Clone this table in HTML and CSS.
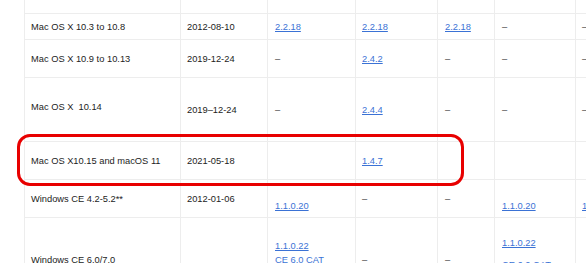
FILE: index.html
```html
<!DOCTYPE html>
<html lang="en">
<head>
<meta charset="utf-8">
<title>Supported platforms</title>
<link rel="stylesheet" href="styles.css">
</head>
<body>
<div class="page">
  <div class="grid">
    <div class="c"></div><div class="c"></div><div class="c"></div><div class="c"></div><div class="c"></div><div class="c"></div><div class="c"></div>

    <div class="c">Mac OS X 10.3 to 10.8</div>
    <div class="c">2012-08-10</div>
    <div class="c"><a href="#">2.2.18</a></div>
    <div class="c"><a href="#">2.2.18</a></div>
    <div class="c"><a href="#">2.2.18</a></div>
    <div class="c"><span class="dash">–</span></div>
    <div class="c"><span class="dash">–</span></div>

    <div class="c">Mac OS X 10.9 to 10.13</div>
    <div class="c">2019-12-24</div>
    <div class="c"><span class="dash">–</span></div>
    <div class="c"><a href="#">2.4.2</a></div>
    <div class="c"><span class="dash">–</span></div>
    <div class="c"><span class="dash">–</span></div>
    <div class="c"><span class="dash">–</span></div>

    <div class="c up">Mac OS X&nbsp; 10.14</div>
    <div class="c">2019–12-24</div>
    <div class="c"><span class="dash">–</span></div>
    <div class="c"><a href="#">2.4.4</a></div>
    <div class="c"><span class="dash">–</span></div>
    <div class="c"><span class="dash">–</span></div>
    <div class="c"><span class="dash">–</span></div>

    <div class="c">Mac OS X10.15 and macOS 11</div>
    <div class="c">2021-05-18</div>
    <div class="c"></div>
    <div class="c"><a href="#">1.4.7</a></div>
    <div class="c"></div>
    <div class="c"></div>
    <div class="c"></div>

    <div class="c">Windows CE 4.2-5.2**</div>
    <div class="c">2012-01-06</div>
    <div class="c"><div class="lines"><br><a href="#">1.1.0.20</a></div></div>
    <div class="c"><span class="dash">–</span></div>
    <div class="c"><span class="dash">–</span></div>
    <div class="c"><div class="lines"><br><a href="#">1.1.0.20</a></div></div>
    <div class="c"><div class="lines"><br><a href="#">1.1.0.20</a></div></div>

    <div class="c">Windows CE 6.0/7.0</div>
    <div class="c"></div>
    <div class="c"><div class="lines"><a href="#">1.1.0.22</a><br><a href="#">CE 6.0 CAT</a><br><a href="#">CE 7.0 CAT</a></div></div>
    <div class="c"><span class="dash">–</span></div>
    <div class="c"><span class="dash">–</span></div>
    <div class="c top"><div class="lines"><a href="#">1.1.0.22</a><span class="gap"><a href="#">CE 6.0 CAT</a></span></div></div>
    <div class="c"></div>
  </div>
  <div class="highlight"></div>
</div>
</body>
</html>
```
FILE: styles.css
```css
html, body {
  margin: 0;
  padding: 0;
  background: #ffffff;
  overflow: hidden;
}

.page {
  position: relative;
  width: 586px;
  height: 263px;
  overflow: hidden;
  font-family: "Liberation Sans", Arial, Helvetica, sans-serif;
  font-size: 9.3px;
  line-height: 14px;
  color: #1c1c1c;
}

.grid {
  margin-left: 24px;
  display: grid;
  grid-template-columns: 155px 86px 87px 81px 56px 80px 80px;
  grid-template-rows: 13px 25px 37px 63px 37px 37px 84px;
  gap: 1px;
  padding-left: 1px;
  background: #ededed;
  width: max-content;
}

.c {
  background: #ffffff;
  display: flex;
  flex-direction: column;
  justify-content: center;
  padding-left: 6px;
  white-space: nowrap;
}

.c:nth-child(7n+3),
.c:nth-child(7n+5),
.c:nth-child(7n+6) {
  padding-left: 7px;
}

.lines {
  display: block;
}

.c.up {
  padding-bottom: 5px;
}

.c.top {
  justify-content: flex-start;
  padding-top: 18px;
}

.gap {
  display: block;
  margin-top: 8px;
}

a {
  color: #3b72d5;
  text-decoration: underline;
}

.dash {
  color: #444444;
}

.highlight {
  position: absolute;
  left: 17px;
  top: 134px;
  width: 447px;
  height: 52px;
  box-sizing: border-box;
  border: 3px solid #e80000;
  border-radius: 13px;
}
```
